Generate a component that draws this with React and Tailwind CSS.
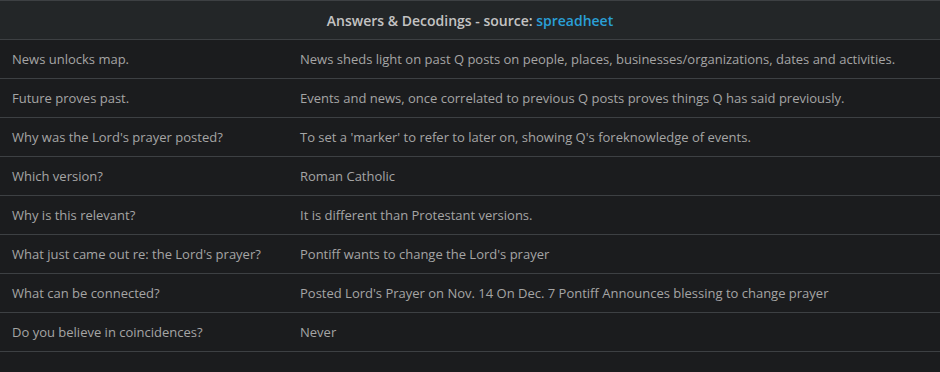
const rows = [
  ["News unlocks map.", "News sheds light on past Q posts on people, places, businesses/organizations, dates and activities."],
  ["Future proves past.", "Events and news, once correlated to previous Q posts proves things Q has said previously."],
  ["Why was the Lord's prayer posted?", "To set a 'marker' to refer to later on, showing Q's foreknowledge of events."],
  ["Which version?", "Roman Catholic"],
  ["Why is this relevant?", "It is different than Protestant versions."],
  ["What just came out re: the Lord's prayer?", "Pontiff wants to change the Lord's prayer"],
  ["What can be connected?", "Posted Lord's Prayer on Nov. 14 On Dec. 7 Pontiff Announces blessing to change prayer"],
  ["Do you believe in coincidences?", "Never"],
];

export default function App() {
  return (
    <div
      className="min-h-[372px] w-full bg-[#1b1c1e] text-[13px] text-[#a5a5a5]"
      style={{ fontFamily: '"Open Sans", "Noto Sans", sans-serif' }}
    >
      <div className="flex h-[40px] items-center justify-center border-y border-[#3d4043] bg-[#232628] text-[14px] font-semibold text-[#c3c3c3]">
        Answers &amp; Decodings - source:&nbsp;
        <a className="text-[#2a9fd6]" href="#">spreadheet</a>
      </div>
      {rows.map(([q, a], i) => (
        <div key={i} className="flex h-[39px] items-center border-b border-[#3d4043] pt-[2px]">
          <div className="w-[288px] shrink-0 pl-3">{q}</div>
          <div className="pl-3">{a}</div>
        </div>
      ))}
    </div>
  );
}
